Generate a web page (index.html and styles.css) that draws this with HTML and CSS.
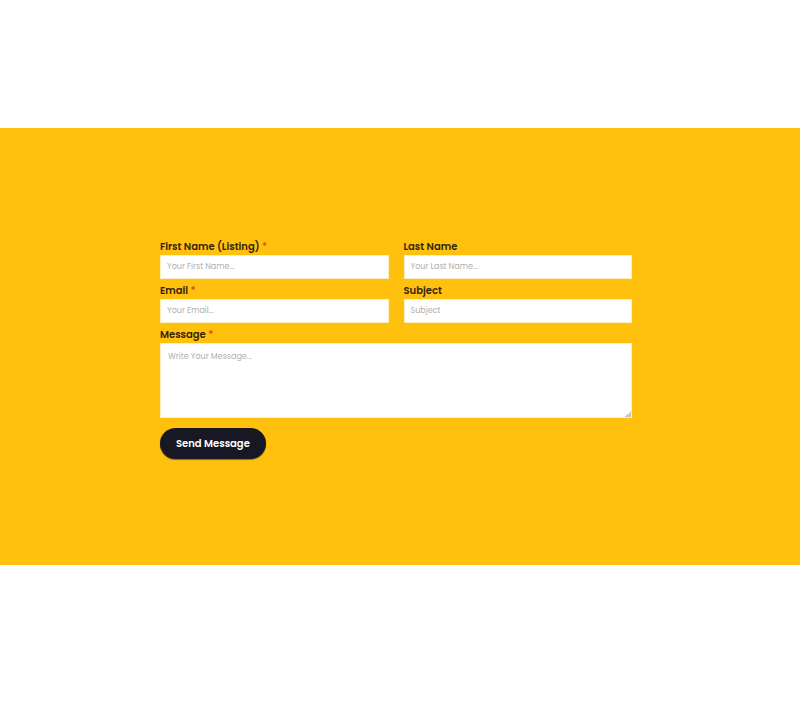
FILE: index.html
```html
<!DOCTYPE html>
<html lang="en">
<head>
<meta charset="utf-8">
<meta name="viewport" content="width=device-width, initial-scale=1">
<title>Contact</title>
<link rel="stylesheet" href="styles.css">
</head>
<body>
<main class="contact">
  <form class="form">
    <div class="field">
      <label for="first">First Name (Listing) <span class="required">*</span></label>
      <input id="first" type="text" placeholder="Your First Name..." required>
    </div>
    <div class="field">
      <label for="last">Last Name</label>
      <input id="last" type="text" placeholder="Your Last Name...">
    </div>
    <div class="field">
      <label for="email">Email <span class="required">*</span></label>
      <input id="email" type="email" placeholder="Your Email..." required>
    </div>
    <div class="field">
      <label for="subject">Subject</label>
      <input id="subject" type="text" placeholder="Subject">
    </div>
    <div class="field wide">
      <label for="message">Message <span class="required">*</span></label>
      <textarea id="message" placeholder="Write Your Message..." required></textarea>
    </div>
    <button class="send" type="submit">Send Message</button>
  </form>
</main>
</body>
</html>
```
FILE: styles.css
```css
* {
  box-sizing: border-box;
}

body {
  margin: 0;
  background: #fff;
  color: #35250d;
  font-family: Poppins, Inter, sans-serif;
}

.contact {
  margin: 128px 0;
  padding: 111px 21% 106px 20%;
  background: #ffc10d;
}

.form {
  display: grid;
  grid-template-columns: 1fr 1fr;
  gap: 4px 15px;
}

.field {
  display: flex;
  flex-direction: column;
}

.wide {
  grid-column: 1 / -1;
}

label {
  font-size: 10px;
  font-weight: 600;
  line-height: 16px;
}

.required {
  color: #e0500c;
}

input,
textarea {
  width: 100%;
  margin: 0;
  border: 1px solid #fbedc4;
  border-radius: 0;
  background: #fff;
  color: #35250d;
  font-family: inherit;
  font-size: 8px;
  outline: none;
}

input {
  height: 24px;
  padding: 0 6px;
}

textarea {
  height: 75px;
  padding: 7px;
  line-height: 12px;
  resize: vertical;
}

textarea::-webkit-resizer {
  background: linear-gradient(135deg, transparent 80%, #c8c8c8 80%);
}

::placeholder {
  color: #b0b0b0;
  opacity: 1;
}

.send {
  justify-self: start;
  margin-top: 6px;
  padding: 8px 16px;
  border: 0;
  border-radius: 16px;
  background: #181824;
  box-shadow: 0 1px 1px #8a6c1c;
  color: #fff;
  font-family: inherit;
  font-size: 10px;
  font-weight: 600;
  line-height: 15px;
}
```
